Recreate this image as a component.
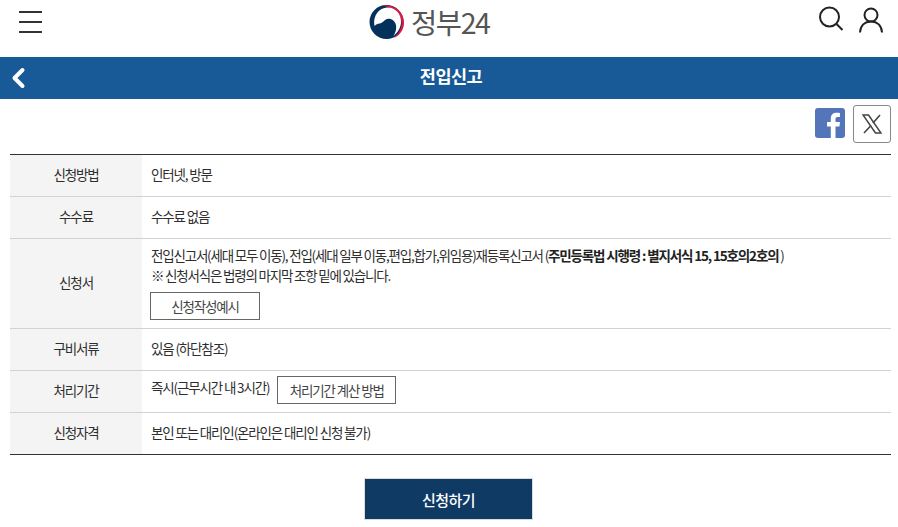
<script>
  const rows = [
    { label: '신청방법', text: '인터넷, 방문' },
    { label: '수수료', text: '수수료 없음' },
    { label: '구비서류', text: '있음 (하단참조)' }
  ]
</script>

<div class="page">
  <header class="top">
    <button class="menu" aria-label="메뉴">
      <span></span><span></span><span></span>
    </button>
    <div class="logo">
      <svg width="36" height="36" viewBox="0 0 36 36" aria-hidden="true">
        <circle cx="17.500" cy="18" r="17" fill="#04305c" />
        <path d="M12 2C22-1 34.500 6 35 18c.3 8-5 14-10.500 16 5.500-4 8.500-10 8-16C32 9 23 2 12 2z" fill="#e3173e" />
        <path d="M5.500 22C3.500 12 10 3.500 18.500 3.500 27 3.500 32.500 10.500 32 18.500c-.3 5-3 10-7.500 13.500 2.500-4 3.500-9 2-12.500-1.500-4-5.500-5.500-8.500-4.500-3 1-4 4-7.500 4.500-2 .3-3.500 1-5 2.500z" fill="#fff" />
      </svg>
      <span class="logo-text">정부24</span>
    </div>
    <div class="top-icons">
      <svg width="26" height="30" viewBox="0 0 26 30" aria-label="검색">
        <circle cx="11.500" cy="14" r="9.500" fill="none" stroke="#222" stroke-width="2" />
        <path d="M18.500 21l6 6" fill="none" stroke="#222" stroke-width="2" />
      </svg>
      <svg width="26" height="30" viewBox="0 0 26 30" aria-label="내 정보">
        <circle cx="13" cy="12" r="6.500" fill="none" stroke="#222" stroke-width="2" />
        <path d="M2 29.500c.5-6.500 4.500-11 11-11s10.500 4.500 11 11" fill="none" stroke="#222" stroke-width="2" />
      </svg>
    </div>
  </header>

  <div class="title-bar">
    <svg class="back" width="16" height="22" viewBox="0 0 16 22" aria-label="뒤로">
      <path d="M12.500 3L4.500 11l8 8" fill="none" stroke="#fff" stroke-width="4" stroke-linecap="round" stroke-linejoin="round" />
    </svg>
    <h1>전입신고</h1>
  </div>

  <div class="share">
    <svg class="fb" width="30" height="30" viewBox="0 0 30 30" aria-label="페이스북">
      <rect width="30" height="30" rx="3" fill="#5475b9" />
      <path d="M20.500 30V18.500h3.900l.6-4.500h-4.500v-2.800c0-1.300.4-2.200 2.200-2.200H25V5c-.5-.1-1.900-.2-3.400-.2-3.400 0-5.800 2-5.800 5.900V14H12v4.500h3.800V30z" fill="#fff" />
    </svg>
    <div class="x-box">
      <svg width="20" height="20" viewBox="0 0 20 20" aria-label="X">
        <path d="M1 1h5.500l12.500 18h-5.500z" fill="none" stroke="#444" stroke-width="1.500" />
        <path d="M18 1l-7 8M9 11.500L2 19" fill="none" stroke="#444" stroke-width="1.600" />
      </svg>
    </div>
  </div>

  <table class="info">
    <tbody>
      <tr class="short">
        <th>{rows[0].label}</th>
        <td>{rows[0].text}</td>
      </tr>
      <tr class="short">
        <th>{rows[1].label}</th>
        <td>{rows[1].text}</td>
      </tr>
      <tr>
        <th>신청서</th>
        <td class="form-cell">
          <p><span class="narrow">전입신고서(세대 모두 이동), 전입(세대 일부 이동,편입,합가,위임용)재등록신고서 (</span><strong>주민등록법 시행령 : 별지서식 15, 15호의2호의</strong> )</p>
          <p class="narrow">※ 신청서식은 법령의 마지막 조항 밑에 있습니다.</p>
          <button class="line-btn wide">신청작성예시</button>
        </td>
      </tr>
      <tr class="short">
        <th>{rows[2].label}</th>
        <td>{rows[2].text}</td>
      </tr>
      <tr class="short">
        <th>처리기간</th>
        <td class="period">
          <span>즉시(근무시간 내 3시간)</span>
          <button class="line-btn">처리기간 계산 방법</button>
        </td>
      </tr>
      <tr class="short last">
        <th>신청자격</th>
        <td>본인 또는 대리인(온라인은 대리인 신청 불가)</td>
      </tr>
    </tbody>
  </table>

  <div class="apply">
    <button>신청하기</button>
  </div>
</div>

<style>
  :global(body) {
    margin: 0;
    background: #fff;
  }

  .page {
    width: 898px;
    height: 527px;
    overflow: hidden;
    font-family: 'Noto Sans CJK KR', 'Noto Sans', sans-serif;
    color: #2e2e2e;
    font-size: 13.5px;
    letter-spacing: -1.15px;
  }

  .top {
    height: 57px;
    display: flex;
    align-items: flex-start;
    justify-content: space-between;
    padding: 0 14px 0 19px;
    box-sizing: border-box;
    position: relative;
  }

  .menu {
    width: 23px;
    height: 22px;
    margin-top: 11px;
    padding: 0;
    border: none;
    background: none;
    display: flex;
    flex-direction: column;
    justify-content: space-between;
  }

  .menu span {
    display: block;
    height: 2px;
    background: #333;
  }

  .logo {
    position: absolute;
    left: 369px;
    top: 4px;
    display: flex;
    align-items: center;
    gap: 6px;
  }

  .logo-text {
    font-size: 28.5px;
    line-height: 36px;
    letter-spacing: -1.4px;
    color: #555;
  }

  .top-icons {
    display: flex;
    gap: 14px;
    margin-top: 3px;
  }

  .title-bar {
    height: 42px;
    background: #185a97;
    display: flex;
    align-items: center;
    justify-content: center;
    position: relative;
  }

  .back {
    position: absolute;
    left: 10px;
    top: 10px;
  }

  .title-bar h1 {
    margin: 0;
    font-size: 17.500px;
    font-weight: 700;
    color: #fff;
    letter-spacing: -0.5px;
    position: relative;
    left: 2px;
    top: -3px;
  }

  .share {
    height: 55px;
    display: flex;
    justify-content: flex-end;
    align-items: flex-start;
    gap: 8px;
    padding: 6px 7px 0 0;
    box-sizing: border-box;
  }

  .fb {
    margin-top: 3px;
  }

  .x-box {
    width: 36px;
    height: 36px;
    border: 1px solid #888;
    border-radius: 3px;
    display: flex;
    align-items: center;
    justify-content: center;
  }

  .info {
    width: 881px;
    margin-left: 10px;
    border-collapse: separate;
    border-spacing: 0;
    border-top: 1px solid #333;
    border-bottom: 1px solid #333;
  }

  .info th,
  .info td {
    border-bottom: 1px solid #d2d2d2;
    padding: 0 0 3px;
    font-size: 13.5px;
    line-height: 22px;
    text-align: left;
  }

  .info tr:last-child th,
  .info tr:last-child td {
    border-bottom: none;
  }

  .info th {
    width: 132px;
    background: #f4f4f4;
    text-align: center;
    font-weight: 400;
  }

  .info td {
    padding-left: 9px;
  }

  .short {
    height: 42px;
  }

  .short.last {
    height: 41px;
  }

  .info .form-cell {
    padding-top: 6px;
    padding-bottom: 8px;
  }

  .form-cell p {
    margin: 0;
    line-height: 20px;
  }

  .narrow {
    letter-spacing: -1.2px;
  }

  .form-cell strong {
    font-weight: 700;
    color: #222;
  }

  .line-btn {
    height: 28px;
    width: 119px;
    padding: 0;
    border: 1px solid #666;
    background: #fff;
    font: inherit;
    color: #444;
    letter-spacing: -1.15px;
    line-height: 26px;
  }

  .wide {
    width: 110px;
    margin-top: 7px;
    display: block;
    margin-left: -1px;
  }

  .period span {
    position: relative;
    top: -3px;
  }

  .period .line-btn {
    margin-left: 6px;
  }

  .apply {
    display: flex;
    justify-content: center;
    margin-top: 23px;
    padding-right: 1px;
  }

  .apply button {
    width: 169px;
    height: 42px;
    border: 1px solid #dcdcdc;
    background: #0e3a63;
    color: #fff;
    font: inherit;
    font-size: 15px;
    font-weight: 500;
    letter-spacing: -0.5px;
  }
</style>
